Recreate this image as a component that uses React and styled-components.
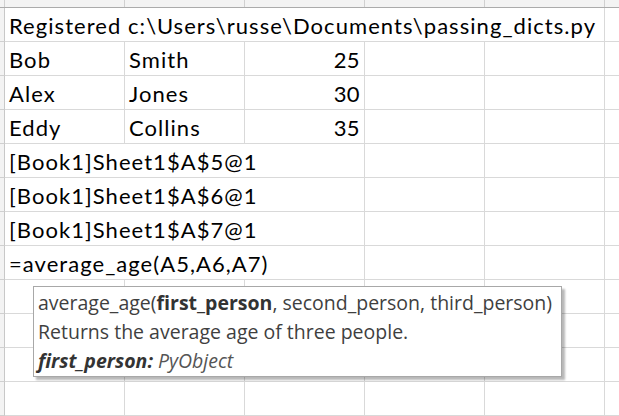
import React from "react";
import styled, { createGlobalStyle } from "styled-components";

const Global = createGlobalStyle`
  html, body { margin: 0; padding: 0; background: #ffffff; }
  body { width: 619px; height: 416px; overflow: hidden; }
`;

const Sheet = styled.div`
  position: relative;
  width: 619px;
  height: 416px;
  overflow: hidden;
  background: #ffffff;
  font-family: Lato, "Liberation Sans", sans-serif;
`;

const HeaderStrip = styled.div`
  display: flex;
  height: 8px;
  box-sizing: border-box;
  border-bottom: 1px solid #ababab;
  background: #f3f3f3;
`;

const Corner = styled.div`
  flex: 0 0 5px;
  box-sizing: border-box;
  border-right: 1px solid #d0d0d0;
`;

const ColHead = styled.div`
  flex: 0 0 120px;
  box-sizing: border-box;
  border-right: 1px solid #d0d0d0;
`;

const Row = styled.div`
  display: flex;
  height: 34px;
`;

const RowHead = styled.div`
  flex: 0 0 5px;
  box-sizing: border-box;
  background: #f3f3f3;
  border-right: 1px solid #c8c8c8;
  border-bottom: 1px solid #d0d0d0;
`;

const Cell = styled.div`
  flex: 0 0 ${(p) => 120 * (p.$span || 1)}px;
  box-sizing: border-box;
  border-right: 1px solid #d9d9d9;
  border-bottom: 1px solid #d9d9d9;
  display: flex;
  align-items: flex-end;
  justify-content: ${(p) => (p.$num ? "flex-end" : "flex-start")};
  padding: 0 ${(p) => (p.$num ? 4 : 4)}px 2px 4px;
  font-size: 22px;
  line-height: 26px;
  letter-spacing: ${(p) => (p.$num ? 0.4 : 1.05)}px;
  color: #000000;
  white-space: nowrap;
`;

const Tooltip = styled.div`
  position: absolute;
  left: 33px;
  top: 286px;
  width: 529px;
  height: 91px;
  box-sizing: border-box;
  background: #ffffff;
  border: 1px solid #a8a8a8;
  box-shadow: 3px 3px 2px rgba(0, 0, 0, 0.28);
  padding: 1px 4px 0 4px;
  font-family: "Open Sans", "Noto Sans", sans-serif;
  font-size: 19.5px;
  line-height: 29px;
  color: #3f3f3f;
  white-space: nowrap;
`;

const TipLine = styled.div``;

const B = styled.b`
  font-weight: 700;
  color: #333333;
`;

const I = styled.i`
  font-style: italic;
  color: #555555;
`;

const rows = [
  { type: "span", span: 5, text: "Registered c:\\Users\\russe\\Documents\\passing_dicts.py", rest: 1 },
  { type: "data", a: "Bob", b: "Smith", c: "25" },
  { type: "data", a: "Alex", b: "Jones", c: "30" },
  { type: "data", a: "Eddy", b: "Collins", c: "35" },
  { type: "span", span: 3, text: "[Book1]Sheet1$A$5@1", rest: 3 },
  { type: "span", span: 3, text: "[Book1]Sheet1$A$6@1", rest: 3 },
  { type: "span", span: 3, text: "[Book1]Sheet1$A$7@1", rest: 3 },
  { type: "span", span: 3, text: "=average_age(A5,A6,A7)", rest: 3 },
  { type: "empty" },
  { type: "empty" },
  { type: "empty" },
  { type: "empty" },
];

function Empties({ n }) {
  return Array.from({ length: n }, (_, i) => <Cell key={i} />);
}

export default function App() {
  return (
    <>
      <Global />
      <Sheet>
        <HeaderStrip>
          <Corner />
          {Array.from({ length: 6 }, (_, i) => (
            <ColHead key={i} />
          ))}
        </HeaderStrip>
        {rows.map((r, i) => (
          <Row key={i}>
            <RowHead />
            {r.type === "span" && (
              <>
                <Cell $span={r.span}>{r.text}</Cell>
                <Empties n={r.rest} />
              </>
            )}
            {r.type === "data" && (
              <>
                <Cell>{r.a}</Cell>
                <Cell>{r.b}</Cell>
                <Cell $num>{r.c}</Cell>
                <Empties n={3} />
              </>
            )}
            {r.type === "empty" && <Empties n={6} />}
          </Row>
        ))}
        <Tooltip>
          <TipLine>
            average_age(<B>first_person</B>, second_person, third_person)
          </TipLine>
          <TipLine>Returns the average age of three people.</TipLine>
          <TipLine>
            <I>
              <B>first_person:</B> PyObject
            </I>
          </TipLine>
        </Tooltip>
      </Sheet>
    </>
  );
}
